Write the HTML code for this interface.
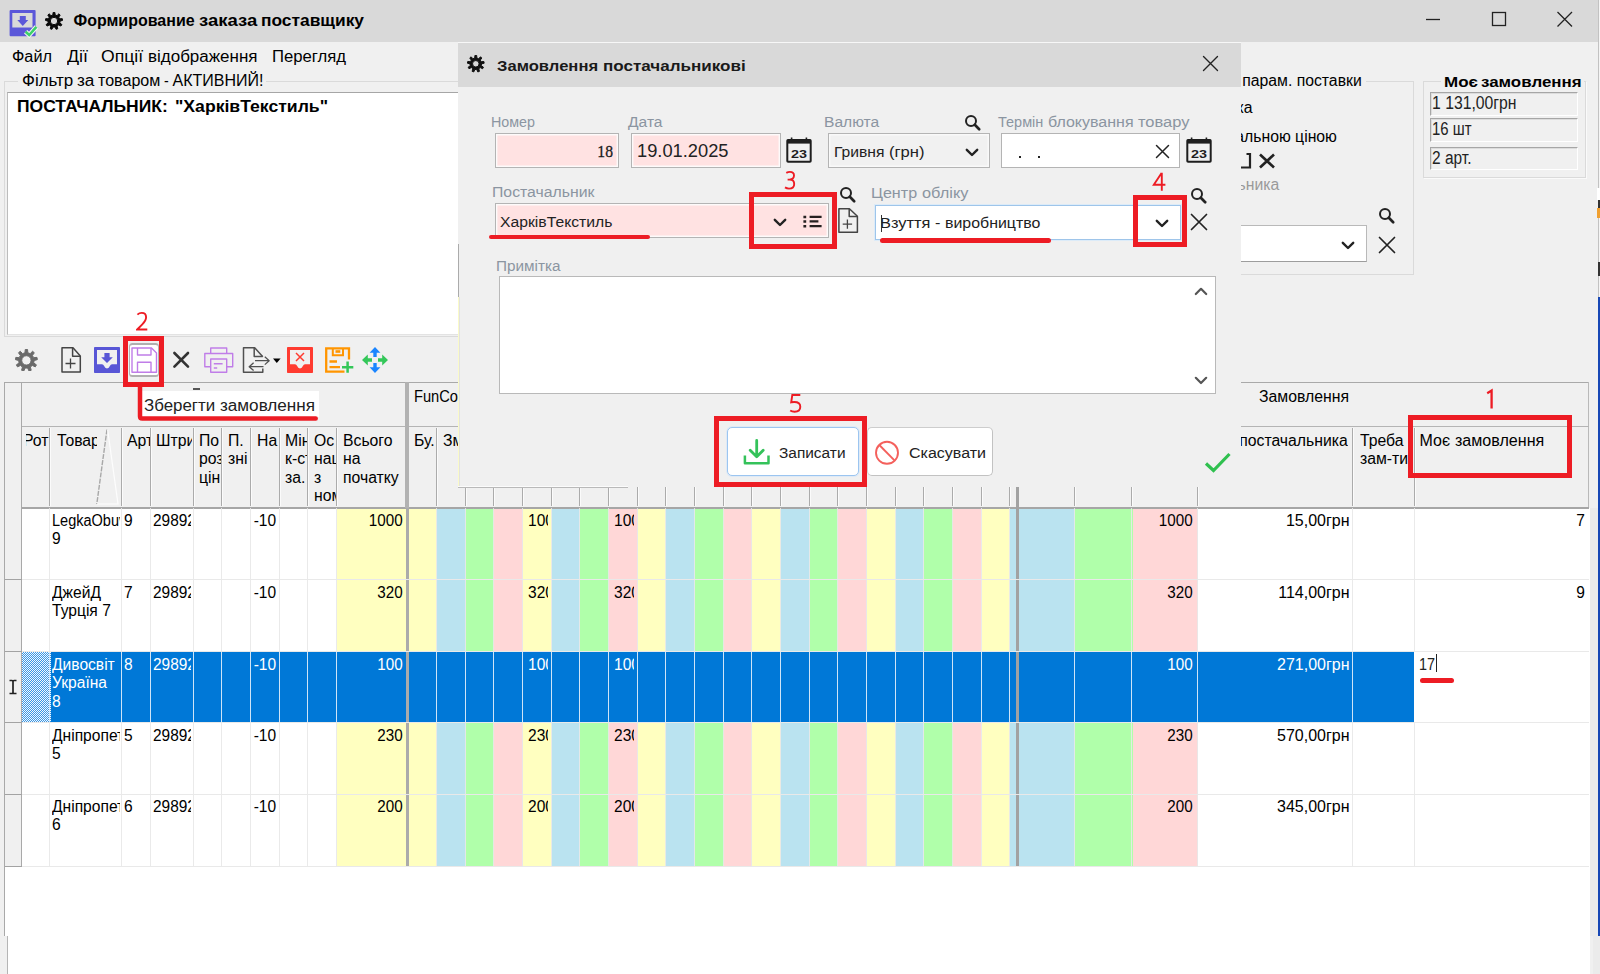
<!DOCTYPE html>
<html><head><meta charset="utf-8"><title>UI</title>
<style>
html,body{margin:0;padding:0;}
body{width:1600px;height:974px;overflow:hidden;position:relative;background:#f0f0f0;font-family:"Liberation Sans",sans-serif;}
div,span.t,svg{position:absolute;}
span.t{white-space:pre;}
</style></head><body>
<div style="left:0px;top:0px;width:1600px;height:42px;background:#d9d9d9;"></div>
<span class="t" style="top:13px;font-size:16px;line-height:16px;color:#000;font-weight:700;left:73.5px;transform-origin:0 0px;">Формирование</span>
<span class="t" style="top:13px;font-size:16px;line-height:16px;color:#000;font-weight:700;left:198.9px;transform-origin:0 0px;transform:scaleX(1.1550);">заказа</span>
<span class="t" style="top:13px;font-size:16px;line-height:16px;color:#000;font-weight:700;left:260.5px;transform-origin:0 0px;transform:scaleX(1.0849);">поставщику</span>
<svg style="left:9px;top:9px" width="30" height="29" viewBox="0 0 30 29"><rect x="0.6" y="1" width="26" height="26.2" rx="1" fill="#5b57d9"/><rect x="3.3" y="4" width="20.2" height="14.5" fill="#d9d9d9"/><path d="M10.8 7H16.8V11H19.3L13.8 17L8.3 11H10.8Z" fill="#5b57d9"/><path d="M16.6 22.7L20.2 26L27.4 17.9" stroke="#f4f4f4" stroke-width="4.6" fill="none"/><path d="M16.6 22.7L20.2 26L27.4 17.9" stroke="#3dd16a" stroke-width="2.6" fill="none"/></svg>
<svg style="left:45px;top:11.5px" width="18" height="18" viewBox="0 0 18 18"><path fill-rule="evenodd" fill="#0a0a0a" stroke="#0a0a0a" stroke-width="1" stroke-linejoin="round" d="M10.15 2.99L9.90 0.45L8.10 0.45L7.85 2.99L6.01 3.66L4.19 1.87L2.81 3.03L4.26 5.13L3.28 6.83L0.73 6.63L0.42 8.40L2.88 9.09L3.22 11.01L1.14 12.50L2.04 14.05L4.37 13.00L5.87 14.26L5.23 16.73L6.92 17.34L8.02 15.04L9.98 15.04L11.08 17.34L12.77 16.73L12.13 14.26L13.63 13.00L15.96 14.05L16.86 12.50L14.78 11.01L15.12 9.09L17.58 8.40L17.27 6.63L14.72 6.83L13.74 5.13L15.19 3.03L13.81 1.87L11.99 3.66Z M12.69 9.0A3.69 3.69 0 1 0 5.31 9.0A3.69 3.69 0 1 0 12.69 9.0Z"/></svg>
<svg style="left:1420px;top:8px" width="160" height="24" viewBox="0 0 160 24"><g stroke="#222" stroke-width="1.3" fill="none"><path d="M6 11.5H20"/><rect x="72.5" y="4.5" width="13" height="13"/><path d="M137.5 4L152 18.5M152 4L137.5 18.5"/></g></svg>
<div style="left:1597.5px;top:0px;width:1.5px;height:297px;background:#c2c2c2;"></div>
<div style="left:1599px;top:0px;width:1px;height:297px;background:#f4f4f4;"></div>
<span class="t" style="top:49px;font-size:16px;line-height:16px;color:#000;left:12px;transform-origin:0 0px;transform:scaleX(1.0167);">Файл</span>
<span class="t" style="top:49px;font-size:16px;line-height:16px;color:#000;left:67px;transform-origin:0 0px;transform:scaleX(1.1144);">Дії</span>
<span class="t" style="top:49px;font-size:16px;line-height:16px;color:#000;left:101.4px;transform-origin:0 0px;transform:scaleX(1.0998);">Опції</span>
<span class="t" style="top:49px;font-size:16px;line-height:16px;color:#000;left:147.8px;transform-origin:0 0px;transform:scaleX(1.0612);">відображення</span>
<span class="t" style="top:49px;font-size:16px;line-height:16px;color:#000;left:272px;transform-origin:0 0px;transform:scaleX(1.0420);">Перегляд</span>
<div style="left:4px;top:81px;width:1090px;height:256px;border:1px solid #dadada;box-sizing:border-box;"></div>
<div style="left:18px;top:72px;width:248px;height:18px;background:#f0f0f0;"></div>
<span class="t" style="top:73px;font-size:16px;line-height:16px;color:#000;left:21.5px;transform-origin:0 0px;transform:scaleX(1.0605);">Фільтр</span>
<span class="t" style="top:73px;font-size:16px;line-height:16px;color:#000;left:77.3px;transform-origin:0 0px;transform:scaleX(1.0718);">за</span>
<span class="t" style="top:73px;font-size:16px;line-height:16px;color:#000;left:98.1px;transform-origin:0 0px;transform:scaleX(1.0038);">товаром</span>
<span class="t" style="top:73px;font-size:16px;line-height:16px;color:#000;left:164.4px;transform-origin:0 0px;transform:scaleX(0.8821);">-</span>
<span class="t" style="top:73px;font-size:16px;line-height:16px;color:#000;left:172.5px;transform-origin:0 0px;">АКТИВНИЙ!</span>
<div style="left:7px;top:92px;width:1000px;height:243px;background:#fff;border:1px solid #b4b4b4;box-sizing:border-box;border-top-color:#a6a6a6;border-left-color:#bcbcbc;border-bottom-color:#e3e3e3;"></div>
<span class="t" style="top:99px;font-size:16px;line-height:16px;color:#000;font-weight:700;left:17.2px;transform-origin:0 0px;transform:scaleX(1.0921);">ПОСТАЧАЛЬНИК:</span>
<span class="t" style="top:99px;font-size:16px;line-height:16px;color:#000;font-weight:700;left:174.7px;transform-origin:0 0px;transform:scaleX(1.1003);">&quot;ХарківТекстиль&quot;</span>
<div style="left:5px;top:508px;width:1585px;height:466px;background:#fff;"></div>
<div style="left:0px;top:42px;width:4px;height:894px;background:#f0f0f0;"></div>
<div style="left:4px;top:382px;width:1px;height:554px;background:#a9a9a9;"></div>
<div style="left:0px;top:936px;width:7px;height:38px;background:#f0f0f0;"></div>
<div style="left:7px;top:936px;width:1px;height:38px;background:#b5b5b5;"></div>
<div style="left:1590px;top:508px;width:8px;height:428px;background:#ebebeb;"></div>
<div style="left:1598px;top:297px;width:2px;height:639px;background:#1747b5;"></div>
<div style="left:1593px;top:936px;width:7px;height:38px;background:#ebebeb;"></div>
<div style="left:337px;top:508px;width:68.5px;height:358px;background:#ffffc0;"></div>
<div style="left:408.5px;top:508px;width:28.65px;height:358px;background:#ffffc0;"></div>
<div style="left:437.15px;top:508px;width:28.65px;height:358px;background:#bae3f0;"></div>
<div style="left:465.8px;top:508px;width:28.65px;height:358px;background:#b0ffaa;"></div>
<div style="left:494.45px;top:508px;width:28.65px;height:358px;background:#ffd7d7;"></div>
<div style="left:523.1px;top:508px;width:28.65px;height:358px;background:#ffffc0;"></div>
<div style="left:551.75px;top:508px;width:28.65px;height:358px;background:#bae3f0;"></div>
<div style="left:580.4px;top:508px;width:28.65px;height:358px;background:#b0ffaa;"></div>
<div style="left:609.05px;top:508px;width:28.65px;height:358px;background:#ffd7d7;"></div>
<div style="left:637.7px;top:508px;width:28.65px;height:358px;background:#ffffc0;"></div>
<div style="left:666.35px;top:508px;width:28.65px;height:358px;background:#bae3f0;"></div>
<div style="left:695.0px;top:508px;width:28.65px;height:358px;background:#b0ffaa;"></div>
<div style="left:723.65px;top:508px;width:28.65px;height:358px;background:#ffd7d7;"></div>
<div style="left:752.3px;top:508px;width:28.65px;height:358px;background:#ffffc0;"></div>
<div style="left:780.95px;top:508px;width:28.65px;height:358px;background:#bae3f0;"></div>
<div style="left:809.6px;top:508px;width:28.65px;height:358px;background:#b0ffaa;"></div>
<div style="left:838.25px;top:508px;width:28.65px;height:358px;background:#ffd7d7;"></div>
<div style="left:866.9px;top:508px;width:28.65px;height:358px;background:#ffffc0;"></div>
<div style="left:895.55px;top:508px;width:28.65px;height:358px;background:#bae3f0;"></div>
<div style="left:924.2px;top:508px;width:28.65px;height:358px;background:#b0ffaa;"></div>
<div style="left:952.85px;top:508px;width:28.65px;height:358px;background:#ffd7d7;"></div>
<div style="left:981.5px;top:508px;width:28.65px;height:358px;background:#ffffc0;"></div>
<div style="left:1010.15px;top:508px;width:5.85px;height:358px;background:#bae3f0;"></div>
<div style="left:1019px;top:508px;width:56px;height:358px;background:#bae3f0;"></div>
<div style="left:1075px;top:508px;width:57.5px;height:358px;background:#b0ffaa;"></div>
<div style="left:1132.5px;top:508px;width:65.0px;height:358px;background:#ffd7d7;"></div>
<div style="left:5px;top:382px;width:1584px;height:126px;background:#f0f0f0;"></div>
<div style="left:5px;top:382px;width:1584px;height:1px;background:#a9a9a9;"></div>
<div style="left:1588px;top:382px;width:1px;height:126px;background:#b9b9b9;"></div>
<div style="left:5px;top:507px;width:1584px;height:2px;background:#a6a6a6;"></div>
<div style="left:21px;top:426px;width:385px;height:1px;background:#b4b4b4;"></div>
<div style="left:409px;top:426px;width:1180px;height:1px;background:#b4b4b4;"></div>
<div style="left:5px;top:383px;width:16px;height:483px;background:#f0f0f0;"></div>
<div style="left:21px;top:382px;width:1px;height:484px;background:#a9a9a9;"></div>
<div style="left:5px;top:579.2px;width:17px;height:1.2px;background:#a3a3a3;"></div>
<div style="left:5px;top:651.2px;width:17px;height:1.2px;background:#a3a3a3;"></div>
<div style="left:5px;top:721.7px;width:17px;height:1.2px;background:#a3a3a3;"></div>
<div style="left:5px;top:793.6px;width:17px;height:1.2px;background:#a3a3a3;"></div>
<div style="left:5px;top:865.5px;width:17px;height:1.2px;background:#a3a3a3;"></div>
<div style="left:48.8px;top:428px;width:1.3px;height:78px;background:#ababab;"></div>
<div style="left:50px;top:428px;width:1px;height:78px;background:#fbfbfb;"></div>
<div style="left:120.8px;top:428px;width:1.3px;height:78px;background:#ababab;"></div>
<div style="left:122px;top:428px;width:1px;height:78px;background:#fbfbfb;"></div>
<div style="left:149.8px;top:428px;width:1.3px;height:78px;background:#ababab;"></div>
<div style="left:151px;top:428px;width:1px;height:78px;background:#fbfbfb;"></div>
<div style="left:192.8px;top:428px;width:1.3px;height:78px;background:#ababab;"></div>
<div style="left:194px;top:428px;width:1px;height:78px;background:#fbfbfb;"></div>
<div style="left:220.8px;top:428px;width:1.3px;height:78px;background:#ababab;"></div>
<div style="left:222px;top:428px;width:1px;height:78px;background:#fbfbfb;"></div>
<div style="left:249.8px;top:428px;width:1.3px;height:78px;background:#ababab;"></div>
<div style="left:251px;top:428px;width:1px;height:78px;background:#fbfbfb;"></div>
<div style="left:278.8px;top:428px;width:1.3px;height:78px;background:#ababab;"></div>
<div style="left:280px;top:428px;width:1px;height:78px;background:#fbfbfb;"></div>
<div style="left:306.8px;top:428px;width:1.3px;height:78px;background:#ababab;"></div>
<div style="left:308px;top:428px;width:1px;height:78px;background:#fbfbfb;"></div>
<div style="left:335.8px;top:428px;width:1.3px;height:78px;background:#ababab;"></div>
<div style="left:337px;top:428px;width:1px;height:78px;background:#fbfbfb;"></div>
<div style="left:435.8px;top:428px;width:1.3px;height:78px;background:#ababab;"></div>
<div style="left:437px;top:428px;width:1px;height:78px;background:#fbfbfb;"></div>
<div style="left:464.8px;top:428px;width:1.3px;height:78px;background:#ababab;"></div>
<div style="left:466px;top:428px;width:1px;height:78px;background:#fbfbfb;"></div>
<div style="left:492.8px;top:428px;width:1.3px;height:78px;background:#ababab;"></div>
<div style="left:494px;top:428px;width:1px;height:78px;background:#fbfbfb;"></div>
<div style="left:521.8px;top:428px;width:1.3px;height:78px;background:#ababab;"></div>
<div style="left:523px;top:428px;width:1px;height:78px;background:#fbfbfb;"></div>
<div style="left:550.8px;top:428px;width:1.3px;height:78px;background:#ababab;"></div>
<div style="left:552px;top:428px;width:1px;height:78px;background:#fbfbfb;"></div>
<div style="left:578.8px;top:428px;width:1.3px;height:78px;background:#ababab;"></div>
<div style="left:580px;top:428px;width:1px;height:78px;background:#fbfbfb;"></div>
<div style="left:607.8px;top:428px;width:1.3px;height:78px;background:#ababab;"></div>
<div style="left:609px;top:428px;width:1px;height:78px;background:#fbfbfb;"></div>
<div style="left:636.8px;top:428px;width:1.3px;height:78px;background:#ababab;"></div>
<div style="left:638px;top:428px;width:1px;height:78px;background:#fbfbfb;"></div>
<div style="left:664.8px;top:428px;width:1.3px;height:78px;background:#ababab;"></div>
<div style="left:666px;top:428px;width:1px;height:78px;background:#fbfbfb;"></div>
<div style="left:693.8px;top:428px;width:1.3px;height:78px;background:#ababab;"></div>
<div style="left:695px;top:428px;width:1px;height:78px;background:#fbfbfb;"></div>
<div style="left:722.8px;top:428px;width:1.3px;height:78px;background:#ababab;"></div>
<div style="left:724px;top:428px;width:1px;height:78px;background:#fbfbfb;"></div>
<div style="left:750.8px;top:428px;width:1.3px;height:78px;background:#ababab;"></div>
<div style="left:752px;top:428px;width:1px;height:78px;background:#fbfbfb;"></div>
<div style="left:779.8px;top:428px;width:1.3px;height:78px;background:#ababab;"></div>
<div style="left:781px;top:428px;width:1px;height:78px;background:#fbfbfb;"></div>
<div style="left:808.8px;top:428px;width:1.3px;height:78px;background:#ababab;"></div>
<div style="left:810px;top:428px;width:1px;height:78px;background:#fbfbfb;"></div>
<div style="left:836.8px;top:428px;width:1.3px;height:78px;background:#ababab;"></div>
<div style="left:838px;top:428px;width:1px;height:78px;background:#fbfbfb;"></div>
<div style="left:865.8px;top:428px;width:1.3px;height:78px;background:#ababab;"></div>
<div style="left:867px;top:428px;width:1px;height:78px;background:#fbfbfb;"></div>
<div style="left:894.8px;top:428px;width:1.3px;height:78px;background:#ababab;"></div>
<div style="left:896px;top:428px;width:1px;height:78px;background:#fbfbfb;"></div>
<div style="left:922.8px;top:428px;width:1.3px;height:78px;background:#ababab;"></div>
<div style="left:924px;top:428px;width:1px;height:78px;background:#fbfbfb;"></div>
<div style="left:951.8px;top:428px;width:1.3px;height:78px;background:#ababab;"></div>
<div style="left:953px;top:428px;width:1px;height:78px;background:#fbfbfb;"></div>
<div style="left:980.8px;top:428px;width:1.3px;height:78px;background:#ababab;"></div>
<div style="left:982px;top:428px;width:1px;height:78px;background:#fbfbfb;"></div>
<div style="left:1008.8px;top:428px;width:1.3px;height:78px;background:#ababab;"></div>
<div style="left:1010px;top:428px;width:1px;height:78px;background:#fbfbfb;"></div>
<div style="left:1073.8px;top:428px;width:1.3px;height:78px;background:#ababab;"></div>
<div style="left:1075px;top:428px;width:1px;height:78px;background:#fbfbfb;"></div>
<div style="left:1130.8px;top:428px;width:1.3px;height:78px;background:#ababab;"></div>
<div style="left:1132px;top:428px;width:1px;height:78px;background:#fbfbfb;"></div>
<div style="left:1196.8px;top:428px;width:1.3px;height:78px;background:#ababab;"></div>
<div style="left:1198px;top:428px;width:1px;height:78px;background:#fbfbfb;"></div>
<div style="left:1351.8px;top:428px;width:1.3px;height:78px;background:#ababab;"></div>
<div style="left:1353px;top:428px;width:1px;height:78px;background:#fbfbfb;"></div>
<div style="left:1413.8px;top:428px;width:1.3px;height:78px;background:#ababab;"></div>
<div style="left:1415px;top:428px;width:1px;height:78px;background:#fbfbfb;"></div>
<div style="left:405px;top:382px;width:4px;height:126px;background:#b2b2b2;"></div>
<div style="left:406px;top:508px;width:2.7px;height:358px;background:#ababab;"></div>
<div style="left:1016.2px;top:428px;width:3px;height:438px;background:#a2a2a2;"></div>
<div style="left:49px;top:508px;width:1px;height:358px;background:rgba(232,232,232,0.9);"></div>
<div style="left:121px;top:508px;width:1px;height:358px;background:rgba(232,232,232,0.9);"></div>
<div style="left:150px;top:508px;width:1px;height:358px;background:rgba(232,232,232,0.9);"></div>
<div style="left:193px;top:508px;width:1px;height:358px;background:rgba(232,232,232,0.9);"></div>
<div style="left:221px;top:508px;width:1px;height:358px;background:rgba(232,232,232,0.9);"></div>
<div style="left:250px;top:508px;width:1px;height:358px;background:rgba(232,232,232,0.9);"></div>
<div style="left:279px;top:508px;width:1px;height:358px;background:rgba(232,232,232,0.9);"></div>
<div style="left:307px;top:508px;width:1px;height:358px;background:rgba(232,232,232,0.9);"></div>
<div style="left:336px;top:508px;width:1px;height:358px;background:rgba(232,232,232,0.9);"></div>
<div style="left:436px;top:508px;width:1px;height:358px;background:rgba(232,232,232,0.9);"></div>
<div style="left:465px;top:508px;width:1px;height:358px;background:rgba(232,232,232,0.9);"></div>
<div style="left:493px;top:508px;width:1px;height:358px;background:rgba(232,232,232,0.9);"></div>
<div style="left:522px;top:508px;width:1px;height:358px;background:rgba(232,232,232,0.9);"></div>
<div style="left:551px;top:508px;width:1px;height:358px;background:rgba(232,232,232,0.9);"></div>
<div style="left:579px;top:508px;width:1px;height:358px;background:rgba(232,232,232,0.9);"></div>
<div style="left:608px;top:508px;width:1px;height:358px;background:rgba(232,232,232,0.9);"></div>
<div style="left:637px;top:508px;width:1px;height:358px;background:rgba(232,232,232,0.9);"></div>
<div style="left:665px;top:508px;width:1px;height:358px;background:rgba(232,232,232,0.9);"></div>
<div style="left:694px;top:508px;width:1px;height:358px;background:rgba(232,232,232,0.9);"></div>
<div style="left:723px;top:508px;width:1px;height:358px;background:rgba(232,232,232,0.9);"></div>
<div style="left:751px;top:508px;width:1px;height:358px;background:rgba(232,232,232,0.9);"></div>
<div style="left:780px;top:508px;width:1px;height:358px;background:rgba(232,232,232,0.9);"></div>
<div style="left:809px;top:508px;width:1px;height:358px;background:rgba(232,232,232,0.9);"></div>
<div style="left:837px;top:508px;width:1px;height:358px;background:rgba(232,232,232,0.9);"></div>
<div style="left:866px;top:508px;width:1px;height:358px;background:rgba(232,232,232,0.9);"></div>
<div style="left:895px;top:508px;width:1px;height:358px;background:rgba(232,232,232,0.9);"></div>
<div style="left:923px;top:508px;width:1px;height:358px;background:rgba(232,232,232,0.9);"></div>
<div style="left:952px;top:508px;width:1px;height:358px;background:rgba(232,232,232,0.9);"></div>
<div style="left:981px;top:508px;width:1px;height:358px;background:rgba(232,232,232,0.9);"></div>
<div style="left:1009px;top:508px;width:1px;height:358px;background:rgba(232,232,232,0.9);"></div>
<div style="left:1074px;top:508px;width:1px;height:358px;background:rgba(232,232,232,0.9);"></div>
<div style="left:1131px;top:508px;width:1px;height:358px;background:rgba(232,232,232,0.9);"></div>
<div style="left:1197px;top:508px;width:1px;height:358px;background:rgba(232,232,232,0.9);"></div>
<div style="left:1352px;top:508px;width:1px;height:358px;background:rgba(232,232,232,0.9);"></div>
<div style="left:1414px;top:508px;width:1px;height:358px;background:rgba(232,232,232,0.9);"></div>
<div style="left:22px;top:579.2px;width:1567px;height:1.2px;background:#e9e9e9;"></div>
<div style="left:22px;top:651.2px;width:1567px;height:1.2px;background:#e9e9e9;"></div>
<div style="left:22px;top:721.7px;width:1567px;height:1.2px;background:#e9e9e9;"></div>
<div style="left:22px;top:793.6px;width:1567px;height:1.2px;background:#e9e9e9;"></div>
<div style="left:22px;top:865.5px;width:1567px;height:1.2px;background:#e9e9e9;"></div>
<div style="left:22px;top:652.3px;width:1392px;height:70px;background:#0078d7;"></div>
<div style="left:22px;top:652px;width:29px;height:70px;background:conic-gradient(#3a96e4 25%,#f4f9fe 0 50%,#3a96e4 0 75%,#f4f9fe 0) 0 0/2px 2px;"></div>
<div style="left:49px;top:652px;width:1px;height:70.3px;background:#cfe4f7;"></div>
<div style="left:121px;top:652px;width:1px;height:70.3px;background:#cfe4f7;"></div>
<div style="left:150px;top:652px;width:1px;height:70.3px;background:#cfe4f7;"></div>
<div style="left:193px;top:652px;width:1px;height:70.3px;background:#cfe4f7;"></div>
<div style="left:221px;top:652px;width:1px;height:70.3px;background:#cfe4f7;"></div>
<div style="left:250px;top:652px;width:1px;height:70.3px;background:#cfe4f7;"></div>
<div style="left:279px;top:652px;width:1px;height:70.3px;background:#cfe4f7;"></div>
<div style="left:307px;top:652px;width:1px;height:70.3px;background:#cfe4f7;"></div>
<div style="left:336px;top:652px;width:1px;height:70.3px;background:#cfe4f7;"></div>
<div style="left:436px;top:652px;width:1px;height:70.3px;background:#cfe4f7;"></div>
<div style="left:465px;top:652px;width:1px;height:70.3px;background:#cfe4f7;"></div>
<div style="left:493px;top:652px;width:1px;height:70.3px;background:#cfe4f7;"></div>
<div style="left:522px;top:652px;width:1px;height:70.3px;background:#cfe4f7;"></div>
<div style="left:551px;top:652px;width:1px;height:70.3px;background:#cfe4f7;"></div>
<div style="left:579px;top:652px;width:1px;height:70.3px;background:#cfe4f7;"></div>
<div style="left:608px;top:652px;width:1px;height:70.3px;background:#cfe4f7;"></div>
<div style="left:637px;top:652px;width:1px;height:70.3px;background:#cfe4f7;"></div>
<div style="left:665px;top:652px;width:1px;height:70.3px;background:#cfe4f7;"></div>
<div style="left:694px;top:652px;width:1px;height:70.3px;background:#cfe4f7;"></div>
<div style="left:723px;top:652px;width:1px;height:70.3px;background:#cfe4f7;"></div>
<div style="left:751px;top:652px;width:1px;height:70.3px;background:#cfe4f7;"></div>
<div style="left:780px;top:652px;width:1px;height:70.3px;background:#cfe4f7;"></div>
<div style="left:809px;top:652px;width:1px;height:70.3px;background:#cfe4f7;"></div>
<div style="left:837px;top:652px;width:1px;height:70.3px;background:#cfe4f7;"></div>
<div style="left:866px;top:652px;width:1px;height:70.3px;background:#cfe4f7;"></div>
<div style="left:895px;top:652px;width:1px;height:70.3px;background:#cfe4f7;"></div>
<div style="left:923px;top:652px;width:1px;height:70.3px;background:#cfe4f7;"></div>
<div style="left:952px;top:652px;width:1px;height:70.3px;background:#cfe4f7;"></div>
<div style="left:981px;top:652px;width:1px;height:70.3px;background:#cfe4f7;"></div>
<div style="left:1009px;top:652px;width:1px;height:70.3px;background:#cfe4f7;"></div>
<div style="left:1074px;top:652px;width:1px;height:70.3px;background:#cfe4f7;"></div>
<div style="left:1131px;top:652px;width:1px;height:70.3px;background:#cfe4f7;"></div>
<div style="left:1197px;top:652px;width:1px;height:70.3px;background:#cfe4f7;"></div>
<div style="left:1352px;top:652px;width:1px;height:70.3px;background:#cfe4f7;"></div>
<div style="left:406px;top:652px;width:2.7px;height:70.3px;background:#ababab;"></div>
<div style="left:1016.2px;top:652px;width:3px;height:70.3px;background:#a2a2a2;"></div>
<span class="t" style="top:389px;font-size:16px;line-height:16px;color:#000;left:414px;transform-origin:0 0px;transform:scaleX(0.9161);">FunCo</span>
<span class="t" style="top:389px;font-size:16px;line-height:16px;color:#000;left:1259px;transform-origin:0 0px;transform:scaleX(0.9871);">Замовлення</span>
<div style="left:26.4px;top:427px;width:22.6px;height:80px;overflow:hidden">
<span class="t" style="top:6px;font-size:16px;line-height:16px;color:#000;left:-3.2px;transform-origin:0 0px;transform:scaleX(0.9850);">Рот</span>
</div>
<div style="left:50px;top:427px;width:47px;height:80px;overflow:hidden">
<span class="t" style="top:6px;font-size:16px;line-height:16px;color:#000;left:7px;transform-origin:0 0px;transform:scaleX(0.9850);">Товар</span>
</div>
<div style="left:122px;top:427px;width:27.5px;height:80px;overflow:hidden">
<span class="t" style="top:6px;font-size:16px;line-height:16px;color:#000;left:5px;transform-origin:0 0px;transform:scaleX(0.9850);">Арт</span>
</div>
<div style="left:151px;top:427px;width:41px;height:80px;overflow:hidden">
<span class="t" style="top:6px;font-size:16px;line-height:16px;color:#000;left:5px;transform-origin:0 0px;transform:scaleX(0.9850);">Штрих</span>
</div>
<div style="left:193.5px;top:427px;width:27.0px;height:80px;overflow:hidden">
<span class="t" style="top:6px;font-size:16px;line-height:16px;color:#000;left:5.5px;transform-origin:0 0px;transform:scaleX(0.9850);">По</span>
</div>
<div style="left:193.5px;top:427px;width:27.0px;height:80px;overflow:hidden">
<span class="t" style="top:24px;font-size:16px;line-height:16px;color:#000;left:5.5px;transform-origin:0 0px;transform:scaleX(0.9850);">роз</span>
</div>
<div style="left:193.5px;top:427px;width:27.0px;height:80px;overflow:hidden">
<span class="t" style="top:43px;font-size:16px;line-height:16px;color:#000;left:5.5px;transform-origin:0 0px;transform:scaleX(0.9850);">цін</span>
</div>
<div style="left:222px;top:427px;width:27.5px;height:80px;overflow:hidden">
<span class="t" style="top:6px;font-size:16px;line-height:16px;color:#000;left:6px;transform-origin:0 0px;transform:scaleX(0.9850);">П.</span>
</div>
<div style="left:222px;top:427px;width:27.5px;height:80px;overflow:hidden">
<span class="t" style="top:24px;font-size:16px;line-height:16px;color:#000;left:6px;transform-origin:0 0px;transform:scaleX(0.9850);">зні</span>
</div>
<div style="left:251px;top:427px;width:27px;height:80px;overflow:hidden">
<span class="t" style="top:6px;font-size:16px;line-height:16px;color:#000;left:5.5px;transform-origin:0 0px;transform:scaleX(0.9850);">На</span>
</div>
<div style="left:279.5px;top:427px;width:27.0px;height:80px;overflow:hidden">
<span class="t" style="top:6px;font-size:16px;line-height:16px;color:#000;left:5.5px;transform-origin:0 0px;transform:scaleX(0.9850);">Мін</span>
</div>
<div style="left:279.5px;top:427px;width:27.0px;height:80px;overflow:hidden">
<span class="t" style="top:24px;font-size:16px;line-height:16px;color:#000;left:5.5px;transform-origin:0 0px;transform:scaleX(0.9850);">к-сть</span>
</div>
<div style="left:279.5px;top:427px;width:27.0px;height:80px;overflow:hidden">
<span class="t" style="top:43px;font-size:16px;line-height:16px;color:#000;left:5.5px;transform-origin:0 0px;transform:scaleX(0.9850);">за.</span>
</div>
<div style="left:308px;top:427px;width:27.5px;height:80px;overflow:hidden">
<span class="t" style="top:6px;font-size:16px;line-height:16px;color:#000;left:6px;transform-origin:0 0px;transform:scaleX(0.9850);">Ос</span>
</div>
<div style="left:308px;top:427px;width:27.5px;height:80px;overflow:hidden">
<span class="t" style="top:24px;font-size:16px;line-height:16px;color:#000;left:6px;transform-origin:0 0px;transform:scaleX(0.9850);">наш</span>
</div>
<div style="left:308px;top:427px;width:27.5px;height:80px;overflow:hidden">
<span class="t" style="top:43px;font-size:16px;line-height:16px;color:#000;left:6px;transform-origin:0 0px;transform:scaleX(0.9850);">з</span>
</div>
<div style="left:308px;top:427px;width:27.5px;height:80px;overflow:hidden">
<span class="t" style="top:61px;font-size:16px;line-height:16px;color:#000;left:6px;transform-origin:0 0px;transform:scaleX(0.9850);">ном</span>
</div>
<div style="left:337px;top:427px;width:67px;height:80px;overflow:hidden">
<span class="t" style="top:6px;font-size:16px;line-height:16px;color:#000;left:5.5px;transform-origin:0 0px;transform:scaleX(0.9850);">Всього</span>
</div>
<div style="left:337px;top:427px;width:67px;height:80px;overflow:hidden">
<span class="t" style="top:24px;font-size:16px;line-height:16px;color:#000;left:5.5px;transform-origin:0 0px;transform:scaleX(0.9850);">на</span>
</div>
<div style="left:337px;top:427px;width:67px;height:80px;overflow:hidden">
<span class="t" style="top:43px;font-size:16px;line-height:16px;color:#000;left:5.5px;transform-origin:0 0px;transform:scaleX(0.9850);">початку</span>
</div>
<div style="left:409px;top:427px;width:27px;height:80px;overflow:hidden">
<span class="t" style="top:6px;font-size:16px;line-height:16px;color:#000;left:5px;transform-origin:0 0px;transform:scaleX(0.9850);">Бу.</span>
</div>
<div style="left:437.5px;top:427px;width:26.5px;height:80px;overflow:hidden">
<span class="t" style="top:6px;font-size:16px;line-height:16px;color:#000;left:5.5px;transform-origin:0 0px;transform:scaleX(0.9850);">Змі</span>
</div>
<div style="left:1198px;top:427px;width:154px;height:80px;overflow:hidden">
<span class="t" style="top:6px;font-size:16px;line-height:16px;color:#000;right:4.5px;transform-origin:100% 0px;transform:scaleX(0.9850);">Ціна постачальника</span>
</div>
<span class="t" style="top:433px;font-size:16px;line-height:16px;color:#000;left:1359.5px;transform-origin:0 0px;transform:scaleX(0.9850);">Треба</span>
<div style="left:1354px;top:427px;width:60px;height:80px;overflow:hidden">
<span class="t" style="top:24px;font-size:16px;line-height:16px;color:#000;left:5.5px;transform-origin:0 0px;transform:scaleX(0.9850);">зам-ти</span>
</div>
<span class="t" style="top:433px;font-size:16px;line-height:16px;color:#000;left:1419.6px;transform-origin:0 0px;">Моє</span>
<span class="t" style="top:433px;font-size:16px;line-height:16px;color:#000;left:1455.0px;transform-origin:0 0px;transform:scaleX(1.0051);">замовлення</span>
<svg style="left:94px;top:428px" width="28" height="80" viewBox="0 0 28 80"><path d="M13 1.5L2.8 76" stroke="#a8a8a8" stroke-width="1.4" fill="none" stroke-dasharray="5 1.2"/><path d="M13.6 1.5L24 76H3" stroke="#fdfdfd" stroke-width="1.2" fill="none"/></svg>
<div style="left:50px;top:508px;width:70.3px;height:71px;overflow:hidden">
<span class="t" style="top:5px;font-size:16px;line-height:16px;color:#000;left:2.2px;transform-origin:0 0px;transform:scaleX(0.9070);">LegkaObuv</span>
</div>
<div style="left:50px;top:508px;width:70.3px;height:71px;overflow:hidden">
<span class="t" style="top:23px;font-size:16px;line-height:16px;color:#000;left:2.2px;transform-origin:0 0px;transform:scaleX(0.9750);">9</span>
</div>
<span class="t" style="top:513px;font-size:16px;line-height:16px;color:#000;left:124px;transform-origin:0 0px;transform:scaleX(0.9700);">9</span>
<div style="left:151px;top:508px;width:40px;height:71px;overflow:hidden">
<span class="t" style="top:5px;font-size:16px;line-height:16px;color:#000;left:2.3px;transform-origin:0 0px;transform:scaleX(0.9650);">29892</span>
</div>
<span class="t" style="top:513px;font-size:16px;line-height:16px;color:#000;right:1323.6px;transform-origin:100% 0px;transform:scaleX(0.9700);">-10</span>
<span class="t" style="top:513px;font-size:16px;line-height:16px;color:#000;right:1197px;transform-origin:100% 0px;transform:scaleX(0.9500);">1000</span>
<div style="left:523px;top:508px;width:25.299999999999955px;height:71px;overflow:hidden">
<span class="t" style="top:5px;font-size:16px;line-height:16px;color:#000;left:5px;transform-origin:0 0px;transform:scaleX(0.9700);">10000</span>
</div>
<div style="left:609px;top:508px;width:25.299999999999955px;height:71px;overflow:hidden">
<span class="t" style="top:5px;font-size:16px;line-height:16px;color:#000;left:5px;transform-origin:0 0px;transform:scaleX(0.9700);">10000</span>
</div>
<span class="t" style="top:513px;font-size:16px;line-height:16px;color:#000;right:407px;transform-origin:100% 0px;transform:scaleX(0.9500);">1000</span>
<span class="t" style="top:513px;font-size:16px;line-height:16px;color:#000;right:250.5px;transform-origin:100% 0px;">15,00грн</span>
<span class="t" style="top:513px;font-size:16px;line-height:16px;color:#000;right:15px;transform-origin:100% 0px;transform:scaleX(0.9700);">7</span>
<div style="left:50px;top:580px;width:70.3px;height:71px;overflow:hidden">
<span class="t" style="top:5px;font-size:16px;line-height:16px;color:#000;left:2.2px;transform-origin:0 0px;transform:scaleX(0.9750);">ДжейД</span>
</div>
<div style="left:50px;top:580px;width:70.3px;height:71px;overflow:hidden">
<span class="t" style="top:23px;font-size:16px;line-height:16px;color:#000;left:2.2px;transform-origin:0 0px;transform:scaleX(0.9750);">Турція 7</span>
</div>
<span class="t" style="top:585px;font-size:16px;line-height:16px;color:#000;left:124px;transform-origin:0 0px;transform:scaleX(0.9700);">7</span>
<div style="left:151px;top:580px;width:40px;height:71px;overflow:hidden">
<span class="t" style="top:5px;font-size:16px;line-height:16px;color:#000;left:2.3px;transform-origin:0 0px;transform:scaleX(0.9650);">29892</span>
</div>
<span class="t" style="top:585px;font-size:16px;line-height:16px;color:#000;right:1323.6px;transform-origin:100% 0px;transform:scaleX(0.9700);">-10</span>
<span class="t" style="top:585px;font-size:16px;line-height:16px;color:#000;right:1197px;transform-origin:100% 0px;transform:scaleX(0.9500);">320</span>
<div style="left:523px;top:580px;width:25.299999999999955px;height:71px;overflow:hidden">
<span class="t" style="top:5px;font-size:16px;line-height:16px;color:#000;left:5px;transform-origin:0 0px;transform:scaleX(0.9700);">3200</span>
</div>
<div style="left:609px;top:580px;width:25.299999999999955px;height:71px;overflow:hidden">
<span class="t" style="top:5px;font-size:16px;line-height:16px;color:#000;left:5px;transform-origin:0 0px;transform:scaleX(0.9700);">3200</span>
</div>
<span class="t" style="top:585px;font-size:16px;line-height:16px;color:#000;right:407px;transform-origin:100% 0px;transform:scaleX(0.9500);">320</span>
<span class="t" style="top:585px;font-size:16px;line-height:16px;color:#000;right:250.5px;transform-origin:100% 0px;">114,00грн</span>
<span class="t" style="top:585px;font-size:16px;line-height:16px;color:#000;right:15px;transform-origin:100% 0px;transform:scaleX(0.9700);">9</span>
<div style="left:50px;top:652px;width:70.3px;height:69px;overflow:hidden">
<span class="t" style="top:5px;font-size:16px;line-height:16px;color:#fff;left:2.2px;transform-origin:0 0px;transform:scaleX(0.9750);">Дивосвіт</span>
</div>
<div style="left:50px;top:652px;width:70.3px;height:69px;overflow:hidden">
<span class="t" style="top:23px;font-size:16px;line-height:16px;color:#fff;left:2.2px;transform-origin:0 0px;transform:scaleX(0.9750);">Україна</span>
</div>
<div style="left:50px;top:652px;width:70.3px;height:69px;overflow:hidden">
<span class="t" style="top:42px;font-size:16px;line-height:16px;color:#fff;left:2.2px;transform-origin:0 0px;transform:scaleX(0.9750);">8</span>
</div>
<span class="t" style="top:657px;font-size:16px;line-height:16px;color:#fff;left:124px;transform-origin:0 0px;transform:scaleX(0.9700);">8</span>
<div style="left:151px;top:652px;width:40px;height:69px;overflow:hidden">
<span class="t" style="top:5px;font-size:16px;line-height:16px;color:#fff;left:2.3px;transform-origin:0 0px;transform:scaleX(0.9650);">29892</span>
</div>
<span class="t" style="top:657px;font-size:16px;line-height:16px;color:#fff;right:1323.6px;transform-origin:100% 0px;transform:scaleX(0.9700);">-10</span>
<span class="t" style="top:657px;font-size:16px;line-height:16px;color:#fff;right:1197px;transform-origin:100% 0px;transform:scaleX(0.9500);">100</span>
<div style="left:523px;top:652px;width:25.299999999999955px;height:69px;overflow:hidden">
<span class="t" style="top:5px;font-size:16px;line-height:16px;color:#fff;left:5px;transform-origin:0 0px;transform:scaleX(0.9700);">1000</span>
</div>
<div style="left:609px;top:652px;width:25.299999999999955px;height:69px;overflow:hidden">
<span class="t" style="top:5px;font-size:16px;line-height:16px;color:#fff;left:5px;transform-origin:0 0px;transform:scaleX(0.9700);">1000</span>
</div>
<span class="t" style="top:657px;font-size:16px;line-height:16px;color:#fff;right:407px;transform-origin:100% 0px;transform:scaleX(0.9500);">100</span>
<span class="t" style="top:657px;font-size:16px;line-height:16px;color:#fff;right:250.5px;transform-origin:100% 0px;">271,00грн</span>
<div style="left:50px;top:722px;width:70.3px;height:71px;overflow:hidden">
<span class="t" style="top:6px;font-size:16px;line-height:16px;color:#000;left:2.2px;transform-origin:0 0px;transform:scaleX(0.9750);">Дніпропет</span>
</div>
<div style="left:50px;top:722px;width:70.3px;height:71px;overflow:hidden">
<span class="t" style="top:24px;font-size:16px;line-height:16px;color:#000;left:2.2px;transform-origin:0 0px;transform:scaleX(0.9750);">5</span>
</div>
<span class="t" style="top:728px;font-size:16px;line-height:16px;color:#000;left:124px;transform-origin:0 0px;transform:scaleX(0.9700);">5</span>
<div style="left:151px;top:722px;width:40px;height:71px;overflow:hidden">
<span class="t" style="top:6px;font-size:16px;line-height:16px;color:#000;left:2.3px;transform-origin:0 0px;transform:scaleX(0.9650);">29892</span>
</div>
<span class="t" style="top:728px;font-size:16px;line-height:16px;color:#000;right:1323.6px;transform-origin:100% 0px;transform:scaleX(0.9700);">-10</span>
<span class="t" style="top:728px;font-size:16px;line-height:16px;color:#000;right:1197px;transform-origin:100% 0px;transform:scaleX(0.9500);">230</span>
<div style="left:523px;top:722px;width:25.299999999999955px;height:71px;overflow:hidden">
<span class="t" style="top:6px;font-size:16px;line-height:16px;color:#000;left:5px;transform-origin:0 0px;transform:scaleX(0.9700);">2300</span>
</div>
<div style="left:609px;top:722px;width:25.299999999999955px;height:71px;overflow:hidden">
<span class="t" style="top:6px;font-size:16px;line-height:16px;color:#000;left:5px;transform-origin:0 0px;transform:scaleX(0.9700);">2300</span>
</div>
<span class="t" style="top:728px;font-size:16px;line-height:16px;color:#000;right:407px;transform-origin:100% 0px;transform:scaleX(0.9500);">230</span>
<span class="t" style="top:728px;font-size:16px;line-height:16px;color:#000;right:250.5px;transform-origin:100% 0px;">570,00грн</span>
<div style="left:50px;top:794px;width:70.3px;height:71px;overflow:hidden">
<span class="t" style="top:5px;font-size:16px;line-height:16px;color:#000;left:2.2px;transform-origin:0 0px;transform:scaleX(0.9750);">Дніпропет</span>
</div>
<div style="left:50px;top:794px;width:70.3px;height:71px;overflow:hidden">
<span class="t" style="top:23px;font-size:16px;line-height:16px;color:#000;left:2.2px;transform-origin:0 0px;transform:scaleX(0.9750);">6</span>
</div>
<span class="t" style="top:799px;font-size:16px;line-height:16px;color:#000;left:124px;transform-origin:0 0px;transform:scaleX(0.9700);">6</span>
<div style="left:151px;top:794px;width:40px;height:71px;overflow:hidden">
<span class="t" style="top:5px;font-size:16px;line-height:16px;color:#000;left:2.3px;transform-origin:0 0px;transform:scaleX(0.9650);">29892</span>
</div>
<span class="t" style="top:799px;font-size:16px;line-height:16px;color:#000;right:1323.6px;transform-origin:100% 0px;transform:scaleX(0.9700);">-10</span>
<span class="t" style="top:799px;font-size:16px;line-height:16px;color:#000;right:1197px;transform-origin:100% 0px;transform:scaleX(0.9500);">200</span>
<div style="left:523px;top:794px;width:25.299999999999955px;height:71px;overflow:hidden">
<span class="t" style="top:5px;font-size:16px;line-height:16px;color:#000;left:5px;transform-origin:0 0px;transform:scaleX(0.9700);">2000</span>
</div>
<div style="left:609px;top:794px;width:25.299999999999955px;height:71px;overflow:hidden">
<span class="t" style="top:5px;font-size:16px;line-height:16px;color:#000;left:5px;transform-origin:0 0px;transform:scaleX(0.9700);">2000</span>
</div>
<span class="t" style="top:799px;font-size:16px;line-height:16px;color:#000;right:407px;transform-origin:100% 0px;transform:scaleX(0.9500);">200</span>
<span class="t" style="top:799px;font-size:16px;line-height:16px;color:#000;right:250.5px;transform-origin:100% 0px;">345,00грн</span>
<div style="left:1414px;top:652px;width:175px;height:70px;background:#fff;"></div>
<span class="t" style="top:657px;font-size:16px;line-height:16px;color:#222;left:1419.3px;transform-origin:0 0px;transform:scaleX(0.9000);">17</span>
<div style="left:1435.5px;top:654px;width:1.8px;height:18px;background:#222;"></div>
<svg style="left:8px;top:679px" width="10" height="16" viewBox="0 0 10 16"><path d="M1.5 1.5H4Q5 1.5 5 2.5V13.5Q5 14.5 4 14.5H1.5M8.5 1.5H6Q5 1.5 5 2.5M5 13.5Q5 14.5 6 14.5H8.5" stroke="#222" stroke-width="1.7" fill="none"/></svg>
<svg style="left:15.3px;top:348.5px" width="22.8" height="22.8" viewBox="0 0 22.8 22.8"><path fill-rule="evenodd" fill="#6a6a6a" stroke="#6a6a6a" stroke-width="1" stroke-linejoin="round" d="M12.85 3.79L12.55 0.46L10.25 0.46L9.95 3.79L7.62 4.63L5.25 2.28L3.49 3.76L5.39 6.50L4.15 8.65L0.83 8.37L0.43 10.63L3.65 11.51L4.08 13.95L1.35 15.87L2.50 17.87L5.53 16.47L7.43 18.06L6.58 21.29L8.74 22.07L10.16 19.05L12.64 19.05L14.06 22.07L16.22 21.29L15.37 18.06L17.27 16.47L20.30 17.87L21.45 15.87L18.72 13.95L19.15 11.51L22.37 10.63L21.97 8.37L18.65 8.65L17.41 6.50L19.31 3.76L17.55 2.28L15.18 4.63Z M16.07 11.4A4.67 4.67 0 1 0 6.73 11.4A4.67 4.67 0 1 0 16.07 11.4Z"/></svg>
<svg style="left:60px;top:346px" width="23" height="28" viewBox="0 0 23 28"><g fill="none" stroke="#444" stroke-width="1.5" stroke-linejoin="round"><path d="M2 1.8H13L20.3 10V26H2Z"/><path d="M12.6 2V10.2H20"/><path d="M5.5 17.5H15.5M10.5 12.5V22.5" stroke-width="1.3"/></g></svg>
<svg style="left:94px;top:347px" width="26" height="26" viewBox="0 0 26 26"><rect x="0" y="0" width="26" height="26" rx="0.8" fill="#5856d6"/><path d="M3 3H23V17.3H18Q16.6 17.3 16 18.8Q15 21.4 13 21.4Q11 21.4 10 18.8Q9.4 17.3 8 17.3H3Z" fill="#f0f0f0"/><path d="M10.4 6H15.6V10.2H18.8L13 16L7.2 10.2H10.4Z" fill="#5856d6"/></svg>
<div style="left:129px;top:343px;width:30px;height:34px;background:#fff;border:1px solid #b4b4b4;box-sizing:border-box;border-radius:3.5px;border-top:2px solid #b0b0b0;border-bottom:2px solid #b0b0b0;"></div>
<svg style="left:130px;top:346px" width="29" height="28" viewBox="0 0 29 28"><g fill="none" stroke="#c07de8" stroke-width="1.4" stroke-linejoin="round"><path d="M2 2H21.5L26.5 7V26.2H2Z"/><path d="M7.5 2V9H21V2.2"/><path d="M7.5 26V16.3H21V26"/></g></svg>
<svg style="left:171px;top:350px" width="21" height="21" viewBox="0 0 21 21"><path d="M3.4 3L17 16.6M17 3L3.4 16.6" stroke="#333" stroke-width="2.6" stroke-linecap="round"/></svg>
<svg style="left:203px;top:346px" width="31" height="28" viewBox="0 0 31 28"><g fill="none" stroke="#c07de8" stroke-width="1.4" stroke-linejoin="round"><path d="M7.7 7.2V2H23.7V7.2"/><path d="M7.7 20.7H1.8V7.5H29.7V20.7H23.7"/><path d="M7.7 13H23.7V26.3H7.7Z"/><path d="M10.8 17.7H19.6M10.8 22H14.2" stroke-width="1.5"/></g></svg>
<svg style="left:241px;top:346px" width="41" height="28" viewBox="0 0 41 28"><g fill="none" stroke="#505050" stroke-width="1.5" stroke-linejoin="round"><path d="M21.8 22.5V26.2H2.5V1.8H13.7L21.8 10.8"/><path d="M13.2 2V10.6H21.5"/><path d="M14 14.7H28M23.8 10.8L28.2 14.7L23.8 18.6" stroke-width="1.2"/><path d="M22.5 20.7H8.5M12.6 16.8L8.2 20.7L12.6 24.6" stroke-width="1.3"/></g><path d="M32 12.4H39.6L35.8 17Z" fill="#000"/></svg>
<svg style="left:287.2px;top:347px" width="26" height="26" viewBox="0 0 26 26"><rect x="0" y="0" width="26" height="26" rx="0.8" fill="#ff3b30"/><path d="M3 3H23V17.3H18Q16.6 17.3 16 18.8Q15 21.4 13 21.4Q11 21.4 10 18.8Q9.4 17.3 8 17.3H3Z" fill="#f0f0f0"/><path d="M9 6L17 14M17 6L9 14" stroke="#ff3b30" stroke-width="1.5" fill="none"/></svg>
<svg style="left:324px;top:346px" width="31" height="28" viewBox="0 0 31 28"><g fill="none" stroke="#ff9500" stroke-width="2.3"><path d="M25 13.5V2.3H2.2V25.7H20.5"/><path d="M8.8 2.3V9.3H19V2.3" stroke-width="2"/><path d="M11.5 5.5H16.3" stroke-width="2.6"/><path d="M5.5 15.5H13M5.5 21.2H16"/></g><path d="M18 21.2H29.3M23.6 15.6V26.8" stroke="#34c759" stroke-width="2.5" fill="none"/></svg>
<svg style="left:361px;top:346px" width="28" height="28" viewBox="0 0 28 28"><g fill="#1a85ff"><path d="M14 1L19.4 6.8H15.7V11H12.3V6.8H8.6Z"/><path d="M14 27L19.4 21.2H15.7V17H12.3V21.2H8.6Z"/></g><g fill="#34c759"><path d="M1 14L6.8 8.6V12.3H11V15.7H6.8V19.4Z"/><path d="M27 14L21.2 8.6V12.3H17V15.7H21.2V19.4Z"/></g></svg>
<div style="left:1100px;top:81px;width:314px;height:194px;border:1px solid #dadada;box-sizing:border-box;"></div>
<div style="left:1236px;top:72px;width:130px;height:18px;background:#f0f0f0;"></div>
<span class="t" style="top:73px;font-size:16px;line-height:16px;color:#000;left:1204.5px;transform-origin:0 0px;transform:scaleX(0.9850);">Дод. парам. поставки</span>
<span class="t" style="top:100px;font-size:16px;line-height:16px;color:#000;left:1199px;transform-origin:0 0px;transform:scaleX(0.9850);">Знижка</span>
<span class="t" style="top:129px;font-size:16px;line-height:16px;color:#000;left:1184px;transform-origin:0 0px;transform:scaleX(0.9850);">З мінімальною ціною</span>
<span class="t" style="top:177px;font-size:16px;line-height:16px;color:#9a9a9a;left:1167.5px;transform-origin:0 0px;transform:scaleX(0.9850);">Постачальника</span>
<svg style="left:1236px;top:150px" width="44" height="22" viewBox="0 0 44 22"><path d="M10.5 4H14V17.5H0" stroke="#222" stroke-width="2.2" fill="none"/><path d="M24 4.5L38 17.5M38 4.5L24 17.5" stroke="#222" stroke-width="2.6" fill="none"/></svg>
<div style="left:1200px;top:225px;width:167px;height:37px;background:#fff;border:1px solid #b9b9b9;box-sizing:border-box;border-bottom-color:#9d9d9d;"></div>
<svg style="left:1340.5px;top:240.6px" width="14" height="10" viewBox="0 0 14 10"><path d="M1.8 1.8L7 7L12.2 1.8" stroke="#222" stroke-width="2.4" fill="none" stroke-linecap="round" stroke-linejoin="round"/></svg>
<svg style="left:1378.2px;top:206.7px" width="19" height="19" viewBox="0 0 19 19"><circle cx="7" cy="7" r="5" stroke="#222" stroke-width="2" fill="none"/><path d="M10.8 10.8L15.2 15.2" stroke="#222" stroke-width="2.7" stroke-linecap="round"/></svg>
<svg style="left:1377.5px;top:236px" width="18" height="18" viewBox="0 0 18 18"><path d="M1.5 1.5L16.5 16.5M16.5 1.5L1.5 16.5" stroke="#222" stroke-width="1.7" fill="none" stroke-linecap="round"/></svg>
<div style="left:1423px;top:81px;width:163px;height:97px;border:1px solid #dadada;box-sizing:border-box;box-shadow:1px 1px 0 #fafafa;"></div>
<div style="left:1441px;top:72px;width:143px;height:18px;background:#f0f0f0;"></div>
<span class="t" style="top:73px;font-size:16px;line-height:16px;color:#000;font-weight:700;left:1444.0px;transform-origin:0 13px;transform:translateY(0.50px) scale(1.0614,0.96);">Моє</span>
<span class="t" style="top:73px;font-size:16px;line-height:16px;color:#000;font-weight:700;left:1480.8px;transform-origin:0 13px;transform:translateY(0.50px) scale(1.0569,0.96);">замовлення</span>
<div style="left:1430px;top:92px;width:148px;height:23.5px;background:#f0f0f0;border:1px solid #a6a6a6;box-sizing:border-box;border-right-color:#fff;border-bottom-color:#fff;box-shadow:inset 1px 1px 0 #dcdcdc;"></div>
<div style="left:1430px;top:118px;width:148px;height:23.5px;background:#f0f0f0;border:1px solid #a6a6a6;box-sizing:border-box;border-right-color:#fff;border-bottom-color:#fff;box-shadow:inset 1px 1px 0 #dcdcdc;"></div>
<div style="left:1430px;top:146.5px;width:148px;height:23.5px;background:#f0f0f0;border:1px solid #a6a6a6;box-sizing:border-box;border-right-color:#fff;border-bottom-color:#fff;box-shadow:inset 1px 1px 0 #dcdcdc;"></div>
<span class="t" style="top:94px;font-size:18px;line-height:18px;color:#222;left:1432px;transform-origin:0 0px;transform:scaleX(0.8748);">1 131,00грн</span>
<span class="t" style="top:120px;font-size:18px;line-height:18px;color:#222;left:1432px;transform-origin:0 0px;transform:scaleX(0.8278);">16 шт</span>
<span class="t" style="top:149px;font-size:18px;line-height:18px;color:#222;left:1432px;transform-origin:0 0px;transform:scaleX(0.8607);">2 арт.</span>
<div style="left:1597px;top:188px;width:3px;height:12px;background:#fff;"></div>
<div style="left:1598px;top:200px;width:2px;height:8px;background:#333;"></div>
<div style="left:1597px;top:208px;width:3px;height:10px;background:#f0a030;"></div>
<div style="left:1598px;top:262px;width:2px;height:14px;background:#333;"></div>
<div style="left:458px;top:43px;width:783px;height:444px;background:#f0f0f0;"></div>
<div style="left:458px;top:43px;width:783px;height:44px;background:#d9d9d9;"></div>
<div style="left:458px;top:42px;width:783px;height:1px;background:#f7f7f7;"></div>
<div style="left:458px;top:244px;width:1px;height:53px;background:#ababab;"></div>
<div style="left:458px;top:297px;width:1.2px;height:190px;background:#fafac8;"></div>
<div style="left:459.2px;top:297px;width:1px;height:190px;background:#e2e2e2;"></div>
<div style="left:458px;top:486px;width:170px;height:1px;background:#fbfbfb;"></div>
<div style="left:458px;top:487px;width:170px;height:1px;background:#b9b9b9;"></div>
<svg style="left:467px;top:55px" width="17.6" height="17.6" viewBox="0 0 17.6 17.6"><path fill-rule="evenodd" fill="#111" stroke="#111" stroke-width="1" stroke-linejoin="round" d="M9.89 3.09L9.68 0.45L7.92 0.45L7.71 3.09L5.97 3.73L4.10 1.84L2.76 2.96L4.30 5.13L3.37 6.74L0.73 6.48L0.42 8.21L2.99 8.88L3.32 10.71L1.13 12.22L2.00 13.74L4.40 12.60L5.83 13.79L5.12 16.35L6.77 16.95L7.87 14.53L9.73 14.53L10.83 16.95L12.48 16.35L11.77 13.79L13.20 12.60L15.60 13.74L16.47 12.22L14.28 10.71L14.61 8.88L17.18 8.21L16.87 6.48L14.23 6.74L13.30 5.13L14.84 2.96L13.50 1.84L11.63 3.73Z M12.06 8.8A3.26 3.26 0 1 0 5.54 8.8A3.26 3.26 0 1 0 12.06 8.8Z"/></svg>
<span class="t" style="top:58px;font-size:16px;line-height:16px;color:#1a1a1a;font-weight:700;left:496.6px;transform-origin:0 13px;transform:scale(1.0373,0.97);">Замовлення</span>
<span class="t" style="top:58px;font-size:16px;line-height:16px;color:#1a1a1a;font-weight:700;left:602.9px;transform-origin:0 13px;transform:scale(1.0649,0.97);">постачальникові</span>
<svg style="left:1201.9px;top:55.4px" width="17" height="17" viewBox="0 0 17 17"><path d="M1.5 1.5L15.5 15.5M15.5 1.5L1.5 15.5" stroke="#222" stroke-width="1.35" fill="none" stroke-linecap="round"/></svg>
<span class="t" style="top:114px;font-size:16px;line-height:16px;color:#8b95a1;left:491px;transform-origin:0 13px;transform:translateY(-0.40px) scale(0.8934,0.93);">Номер</span>
<span class="t" style="top:114px;font-size:16px;line-height:16px;color:#8b95a1;left:628px;transform-origin:0 13px;transform:translateY(-0.30px) scale(0.9750,0.93);">Дата</span>
<span class="t" style="top:114px;font-size:16px;line-height:16px;color:#8b95a1;left:824px;transform-origin:0 13px;transform:translateY(-0.30px) scale(0.9750,0.93);">Валюта</span>
<span class="t" style="top:114px;font-size:16px;line-height:16px;color:#8b95a1;left:998.4px;transform-origin:0 13px;transform:translateY(-0.40px) scale(0.9049,0.93);">Термін</span>
<span class="t" style="top:114px;font-size:16px;line-height:16px;color:#8b95a1;left:1047.9px;transform-origin:0 13px;transform:translateY(-0.40px) scale(1.0001,0.93);">блокування</span>
<span class="t" style="top:114px;font-size:16px;line-height:16px;color:#8b95a1;left:1137.8px;transform-origin:0 13px;transform:translateY(-0.40px) scale(1.0303,0.93);">товару</span>
<span class="t" style="top:184px;font-size:16px;line-height:16px;color:#8b95a1;left:491.5px;transform-origin:0 13px;transform:scale(0.9877,0.93);">Постачальник</span>
<span class="t" style="top:185px;font-size:16px;line-height:16px;color:#8b95a1;left:871.3px;transform-origin:0 13px;transform:scale(1.0066,0.93);">Центр</span>
<span class="t" style="top:185px;font-size:16px;line-height:16px;color:#8b95a1;left:921.5px;transform-origin:0 13px;transform:scale(1.0215,0.93);">обліку</span>
<span class="t" style="top:258px;font-size:16px;line-height:16px;color:#8b95a1;left:495.5px;transform-origin:0 13px;transform:scale(0.9560,0.93);">Примітка</span>
<div style="left:495px;top:133px;width:124px;height:35px;background:#ffe2e2;border:1px solid #b4b4b4;box-sizing:border-box;box-shadow:inset 0 0 0 1.4px #fdfafa;"></div>
<span class="t" style="top:143px;font-size:17px;line-height:17px;color:#1a1a1a;right:987px;transform-origin:100% 0px;transform:scaleX(0.9200);font-family:'Liberation Serif',serif;-webkit-text-stroke:0.3px #1a1a1a;">18</span>
<div style="left:630.5px;top:133px;width:150.0px;height:35px;background:#ffe2e2;border:1px solid #b4b4b4;box-sizing:border-box;box-shadow:inset 0 0 0 1.4px #fdfafa;"></div>
<span class="t" style="top:142px;font-size:18px;line-height:18px;color:#222;left:636.5px;transform-origin:0 0px;transform:scaleX(1.0156);">19.01.2025</span>
<svg style="left:785.5px;top:136.5px" width="26" height="26" viewBox="0 0 26 26"><rect x="1.3" y="3" width="23.4" height="21.7" rx="0.8" fill="none" stroke="#1e1e1e" stroke-width="2"/><path d="M1.3 2.6H24.7V6.6H1.3Z" fill="#1e1e1e"/><path d="M5.6 0.6V3M20.4 0.6V3" stroke="#1e1e1e" stroke-width="1.6"/><text x="13" y="20.6" font-family="Liberation Sans, sans-serif" font-size="11.5" font-weight="700" text-anchor="middle" fill="#1e1e1e" textLength="16" lengthAdjust="spacingAndGlyphs">23</text></svg>
<div style="left:828px;top:133px;width:161.5px;height:35px;background:#f1f1f1;border:1px solid #b4b4b4;box-sizing:border-box;box-shadow:inset 0 0 0 1.4px #f9f9f9;"></div>
<span class="t" style="top:144px;font-size:16px;line-height:16px;color:#222;left:833.7px;transform-origin:0 13px;transform:scale(0.9785,0.93);">Гривня</span>
<span class="t" style="top:144px;font-size:16px;line-height:16px;color:#222;left:889.2px;transform-origin:0 13px;transform:scale(1.0370,0.93);">(грн)</span>
<svg style="left:964.9px;top:148.2px" width="14" height="10" viewBox="0 0 14 10"><path d="M1.8 1.8L7 7L12.2 1.8" stroke="#222" stroke-width="2.4" fill="none" stroke-linecap="round" stroke-linejoin="round"/></svg>
<svg style="left:963.7px;top:113.7px" width="19" height="19" viewBox="0 0 19 19"><circle cx="7" cy="7" r="5" stroke="#222" stroke-width="2" fill="none"/><path d="M10.8 10.8L15.2 15.2" stroke="#222" stroke-width="2.7" stroke-linecap="round"/></svg>
<div style="left:1001px;top:133px;width:179px;height:35px;background:#fff;border:1px solid #b4b4b4;box-sizing:border-box;box-shadow:inset 0 0 0 1.4px #fff;"></div>
<div style="left:1019px;top:155.5px;width:2px;height:2px;background:#222;"></div>
<div style="left:1038px;top:155.5px;width:2px;height:2px;background:#222;"></div>
<svg style="left:1155px;top:144px" width="15" height="15" viewBox="0 0 15 15"><path d="M1.5 1.5L13.5 13.5M13.5 1.5L1.5 13.5" stroke="#222" stroke-width="1.5" fill="none" stroke-linecap="round"/></svg>
<svg style="left:1185.5px;top:136.5px" width="26" height="26" viewBox="0 0 26 26"><rect x="1.3" y="3" width="23.4" height="21.7" rx="0.8" fill="none" stroke="#1e1e1e" stroke-width="2"/><path d="M1.3 2.6H24.7V6.6H1.3Z" fill="#1e1e1e"/><path d="M5.6 0.6V3M20.4 0.6V3" stroke="#1e1e1e" stroke-width="1.6"/><text x="13" y="20.6" font-family="Liberation Sans, sans-serif" font-size="11.5" font-weight="700" text-anchor="middle" fill="#1e1e1e" textLength="16" lengthAdjust="spacingAndGlyphs">23</text></svg>
<div style="left:495px;top:203px;width:334px;height:35px;background:#ffe2e2;border:1px solid #b4b4b4;box-sizing:border-box;box-shadow:inset 0 0 0 1.4px #fdfafa;"></div>
<span class="t" style="top:214px;font-size:16px;line-height:16px;color:#222;left:499.5px;transform-origin:0 13px;transform:scale(0.9832,0.93);">ХарківТекстиль</span>
<svg style="left:772.8px;top:217.8px" width="14" height="10" viewBox="0 0 14 10"><path d="M1.8 1.8L7 7L12.2 1.8" stroke="#222" stroke-width="2.4" fill="none" stroke-linecap="round" stroke-linejoin="round"/></svg>
<svg style="left:802px;top:214px" width="22" height="16" viewBox="0 0 22 16"><g stroke="#262020" stroke-width="2.5" fill="none"><path d="M1.4 2.9H4.2M1.4 7.4H4.2M1.4 12.2H4.2"/><path d="M7.6 2.9H19.6M7.6 7.4H16.4M7.6 12.2H19.6" stroke-width="2.3"/></g></svg>
<svg style="left:839.2px;top:185.7px" width="19" height="19" viewBox="0 0 19 19"><circle cx="7" cy="7" r="5" stroke="#222" stroke-width="2" fill="none"/><path d="M10.8 10.8L15.2 15.2" stroke="#222" stroke-width="2.7" stroke-linecap="round"/></svg>
<svg style="left:837px;top:206.5px" width="24" height="27" viewBox="0 0 24 27"><g fill="none" stroke="#444" stroke-width="1.5" stroke-linejoin="round"><path d="M1.9 1.7H12.4L20.4 9.3V25.3H1.9Z"/><path d="M12.2 2V9.5H20.2"/><path d="M5.7 17.1H15.1M10.4 12.4V21.8" stroke-width="1.3"/></g></svg>
<div style="left:875px;top:204.5px;width:305.5px;height:35px;background:#fff;border:1px solid #9ec5ea;box-sizing:border-box;box-shadow:0 0 0 1px #dcebf8;"></div>
<span class="t" style="top:215px;font-size:16px;line-height:16px;color:#222;left:880.1px;transform-origin:0 13px;transform:scale(1.0253,0.93);">Взуття</span>
<span class="t" style="top:215px;font-size:16px;line-height:16px;color:#222;left:935.1px;transform-origin:0 13px;transform:scale(1.0135,0.93);">-</span>
<span class="t" style="top:215px;font-size:16px;line-height:16px;color:#222;left:944.5px;transform-origin:0 13px;transform:scale(0.9949,0.93);">виробництво</span>
<div style="left:881px;top:215px;width:1px;height:17px;background:#333;"></div>
<svg style="left:1155px;top:219.1px" width="14" height="10" viewBox="0 0 14 10"><path d="M1.8 1.8L7 7L12.2 1.8" stroke="#222" stroke-width="2.4" fill="none" stroke-linecap="round" stroke-linejoin="round"/></svg>
<svg style="left:1190.2px;top:186.7px" width="19" height="19" viewBox="0 0 19 19"><circle cx="7" cy="7" r="5" stroke="#222" stroke-width="2" fill="none"/><path d="M10.8 10.8L15.2 15.2" stroke="#222" stroke-width="2.7" stroke-linecap="round"/></svg>
<svg style="left:1190px;top:213px" width="18" height="18" viewBox="0 0 18 18"><path d="M1.5 1.5L16.5 16.5M16.5 1.5L1.5 16.5" stroke="#222" stroke-width="1.7" fill="none" stroke-linecap="round"/></svg>
<div style="left:499px;top:276px;width:717px;height:118px;background:#fff;border:1px solid #b9b9b9;box-sizing:border-box;"></div>
<svg style="left:1194.3px;top:375.6px" width="14" height="10" viewBox="0 0 14 10"><path d="M1.8 1.8L7 7L12.2 1.8" stroke="#555" stroke-width="2.2" fill="none" stroke-linecap="round" stroke-linejoin="round"/></svg>
<svg style="left:1194.3px;top:286.4px" width="14" height="10" viewBox="0 0 14 10"><path d="M1.8 8L7 2.8L12.2 8" stroke="#555" stroke-width="2.2" fill="none" stroke-linecap="round" stroke-linejoin="round"/></svg>
<div style="left:727px;top:427px;width:132px;height:49px;background:#fff;border:1.5px solid #9cc5f0;box-sizing:border-box;border-radius:5px;box-shadow:0 0 0 1px #dfeaf6;"></div>
<svg style="left:742px;top:437px" width="30" height="30" viewBox="0 0 30 30"><g fill="none" stroke="#34c25a" stroke-width="2.8" stroke-linejoin="round" stroke-linecap="round"><path d="M14.7 3.5V19M8.2 13.2L14.7 19.7L21.2 13.2"/><path d="M2.9 18.5V26.3H26.5V18.5" stroke-linecap="butt" stroke-width="2.5"/></g></svg>
<span class="t" style="top:445px;font-size:16px;line-height:16px;color:#222;left:779px;transform-origin:0 13px;transform:scale(0.9640,0.93);">Записати</span>
<div style="left:867px;top:427px;width:125.5px;height:49px;background:#fff;border:1px solid #cdcdcd;box-sizing:border-box;border-radius:5px;border-right:1.5px solid #c2c2c2;border-bottom:1.5px solid #c2c2c2;"></div>
<svg style="left:874px;top:439.5px" width="26" height="26" viewBox="0 0 26 26"><circle cx="13" cy="12.8" r="11" fill="none" stroke="#f4605c" stroke-width="1.9"/><path d="M5.3 5L20.7 20.6" stroke="#f4605c" stroke-width="1.9"/></svg>
<span class="t" style="top:445px;font-size:16px;line-height:16px;color:#222;left:909px;transform-origin:0 13px;transform:scale(1.0008,0.93);">Скасувати</span>
<svg style="left:1203px;top:451px" width="30" height="24" viewBox="0 0 30 24"><path d="M3 12.5L10.5 19.5L26.5 3" stroke="#2fc04f" stroke-width="3.2" fill="none"/></svg>
<div style="left:123px;top:336px;width:41px;height:50.5px;border:5px solid #ed1c24;box-sizing:border-box;"></div>
<div style="left:142px;top:390.5px;width:177px;height:26px;background:#fff;"></div>
<span class="t" style="top:398px;font-size:16px;line-height:16px;color:#222;left:144.3px;transform-origin:0 0px;transform:scaleX(1.0555);">Зберегти</span>
<span class="t" style="top:398px;font-size:16px;line-height:16px;color:#222;left:220.2px;transform-origin:0 0px;transform:scaleX(1.0693);">замовлення</span>
<div style="left:193px;top:388px;width:7px;height:1.5px;background:#555;"></div>
<svg style="left:134px;top:384px" width="190" height="40" viewBox="0 0 190 40"><path d="M6 2V32.2Q6 34.5 8.3 34.5H181.7" stroke="#ed1c24" stroke-width="4.5" fill="none" stroke-linecap="round"/></svg>
<svg style="left:136px;top:310px" width="16" height="24" viewBox="0 0 16 24"><path d="M1.4 4.6Q3.3 2.9 5.7 2.9C8.5 2.9 10.1 4.8 10.1 7.3C10.1 9.9 8.7 11.9 6.3 14.3L1.2 19.5H11.3" stroke="#ed1c24" stroke-width="1.9" fill="none" stroke-linejoin="miter"/></svg>
<div style="left:748.5px;top:192px;width:88.5px;height:57px;border:5px solid #ed1c24;box-sizing:border-box;"></div>
<svg style="left:784px;top:169px" width="16" height="24" viewBox="0 0 16 24"><path d="M2.3 3.9Q4.1 2.9 5.9 2.9C8.5 2.9 10 4.5 10 6.6C10 8.9 8.3 10.6 5.6 10.6H3.6M5.6 10.6C8.4 10.6 10.2 12.3 10.2 14.9C10.2 17.7 8.2 19.6 5 19.6Q2.8 19.6 1 18.4" stroke="#ed1c24" stroke-width="1.9" fill="none" stroke-linejoin="miter"/></svg>
<div style="left:489px;top:234.5px;width:161px;height:4.5px;background:#ed1c24;border-radius:2.25px;"></div>
<div style="left:1133px;top:195px;width:54px;height:52px;border:5px solid #ed1c24;box-sizing:border-box;"></div>
<svg style="left:1152px;top:170px" width="16" height="24" viewBox="0 0 16 24"><path d="M9.8 2.7V20.8M9.6 2.9L1.8 14.8H13.4" stroke="#ed1c24" stroke-width="1.9" fill="none" stroke-linejoin="miter"/></svg>
<div style="left:880px;top:237.5px;width:171px;height:5.0px;background:#ed1c24;border-radius:2.50px;"></div>
<div style="left:714px;top:416px;width:153px;height:71px;border:5px solid #ed1c24;box-sizing:border-box;"></div>
<svg style="left:789px;top:392px" width="16" height="24" viewBox="0 0 16 24"><path d="M11.3 3H3.3L2.2 10.3Q3.5 10 5.3 10C9 10 11.3 11.8 11.3 14.7C11.3 17.8 9 19.7 5.6 19.7Q3 19.7 1.2 18.5" stroke="#ed1c24" stroke-width="1.9" fill="none" stroke-linejoin="miter"/></svg>
<div style="left:1408px;top:415px;width:164px;height:63px;border:5px solid #ed1c24;box-sizing:border-box;"></div>
<svg style="left:1486.2px;top:388.2px" width="16" height="24" viewBox="0 0 16 24"><path d="M1.2 5.2L5.6 2.6V20.4" stroke="#ed1c24" stroke-width="2.3" fill="none" stroke-linejoin="miter"/></svg>
<div style="left:1419.5px;top:678px;width:34.4px;height:5px;background:#ed1c24;border-radius:2.50px;"></div>
</body></html>
